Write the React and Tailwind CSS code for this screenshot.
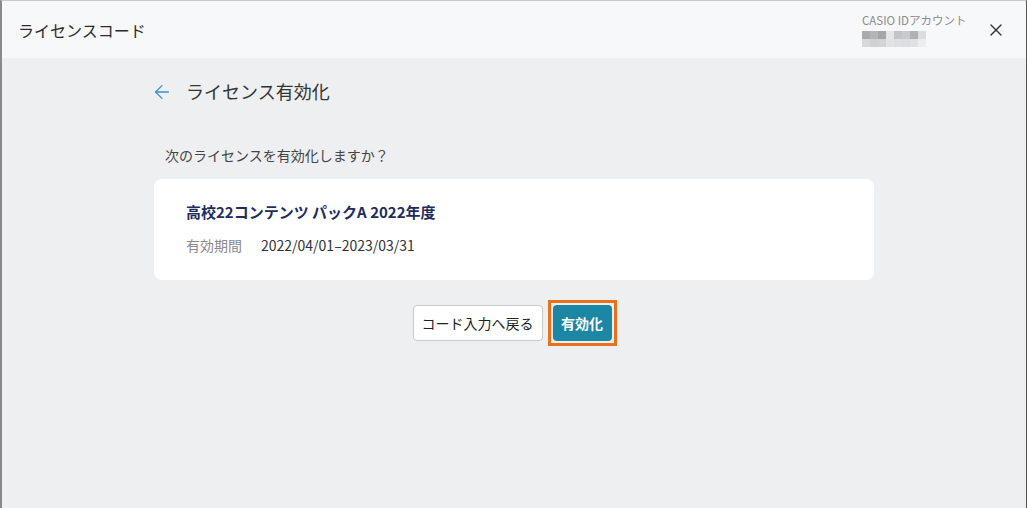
import { X, ArrowLeft } from "lucide-react";

const font = { fontFamily: '"Noto Sans CJK JP", "Noto Sans", sans-serif' };

// blurred account name (mosaic)
const mosaic = [
  ["#a9aaae", "#b4b5b8", "#a5a6aa", "#e4e5e7", "#c3c4c7", "#c9cacc", "#b0b1b4", "#dcdddf"],
  ["#d7d8da", "#d0d1d3", "#d3d4d6", "#e2e3e5", "#dedfe1", "#dcdde0", "#e0e1e3", "#eceef0"],
];

function Mosaic() {
  return (
    <div className="flex flex-col">
      {mosaic.map((row, i) => (
        <div key={i} className="flex">
          {row.map((c, j) => (
            <div key={j} className="w-2 h-2" style={{ background: c }} />
          ))}
        </div>
      ))}
    </div>
  );
}

export default function App() {
  return (
    <div
      className="w-[1027px] h-[508px] flex flex-col bg-[#eeeff1] border-t border-t-[#c8c8c8] border-l-2 border-l-[#8a8a8a] border-r border-r-[#555]"
      style={font}
    >
      {/* Header */}
      <div className="h-[57px] shrink-0 bg-[#f7f8fa] flex items-center justify-between pl-4 pr-5">
        <h1 className="text-[16px] text-[#2b2b2b]">ライセンスコード</h1>
        <div className="flex items-center gap-5">
          <div className="w-[104px] flex flex-col gap-[4px] pt-[3px]">
            <span className="text-[11.5px] leading-none text-[#8c8c8c] whitespace-nowrap">CASIO IDアカウント</span>
            <Mosaic />
          </div>
          <X className="w-5 h-5 text-[#333]" strokeWidth={1.6} />
        </div>
      </div>

      {/* Body */}
      <div className="flex-1 flex justify-center">
        <div className="w-[720px] flex flex-col">
          <div className="flex items-center gap-[13px] mt-[20px] -ml-[3px]">
            <ArrowLeft className="w-[22px] h-[22px] text-[#3b8fd0]" strokeWidth={1.4} />
            <h2 className="text-[18px] text-[#333]">ライセンス有効化</h2>
          </div>

          <p className="mt-[40px] ml-[11px] text-[14px] text-[#444]">次のライセンスを有効化しますか？</p>

          <div className="mt-[13px] bg-white rounded-lg h-[101px] px-8 pt-[22px]">
            <div className="text-[15px] font-bold text-[#1f2d5c]">高校22コンテンツ パックA 2022年度</div>
            <div className="mt-[11px] flex text-[14px]">
              <span className="w-[75px] text-[#8a8a8a]">有効期間</span>
              <span className="text-[#333]">2022/04/01–2023/03/31</span>
            </div>
          </div>

          <div className="mt-5 flex justify-center items-center gap-[5px] pl-[1px]">
            <button className="h-9 w-[130px] bg-white border border-[#c9c9c9] rounded text-[14px] text-[#222]">
              コード入力へ戻る
            </button>
            <div className="border-[3px] border-[#e8701f] p-[2px]">
              <button className="h-9 w-[59px] bg-[#1b87a5] rounded text-[14px] font-bold text-white">
                有効化
              </button>
            </div>
          </div>
        </div>
      </div>
    </div>
  );
}
